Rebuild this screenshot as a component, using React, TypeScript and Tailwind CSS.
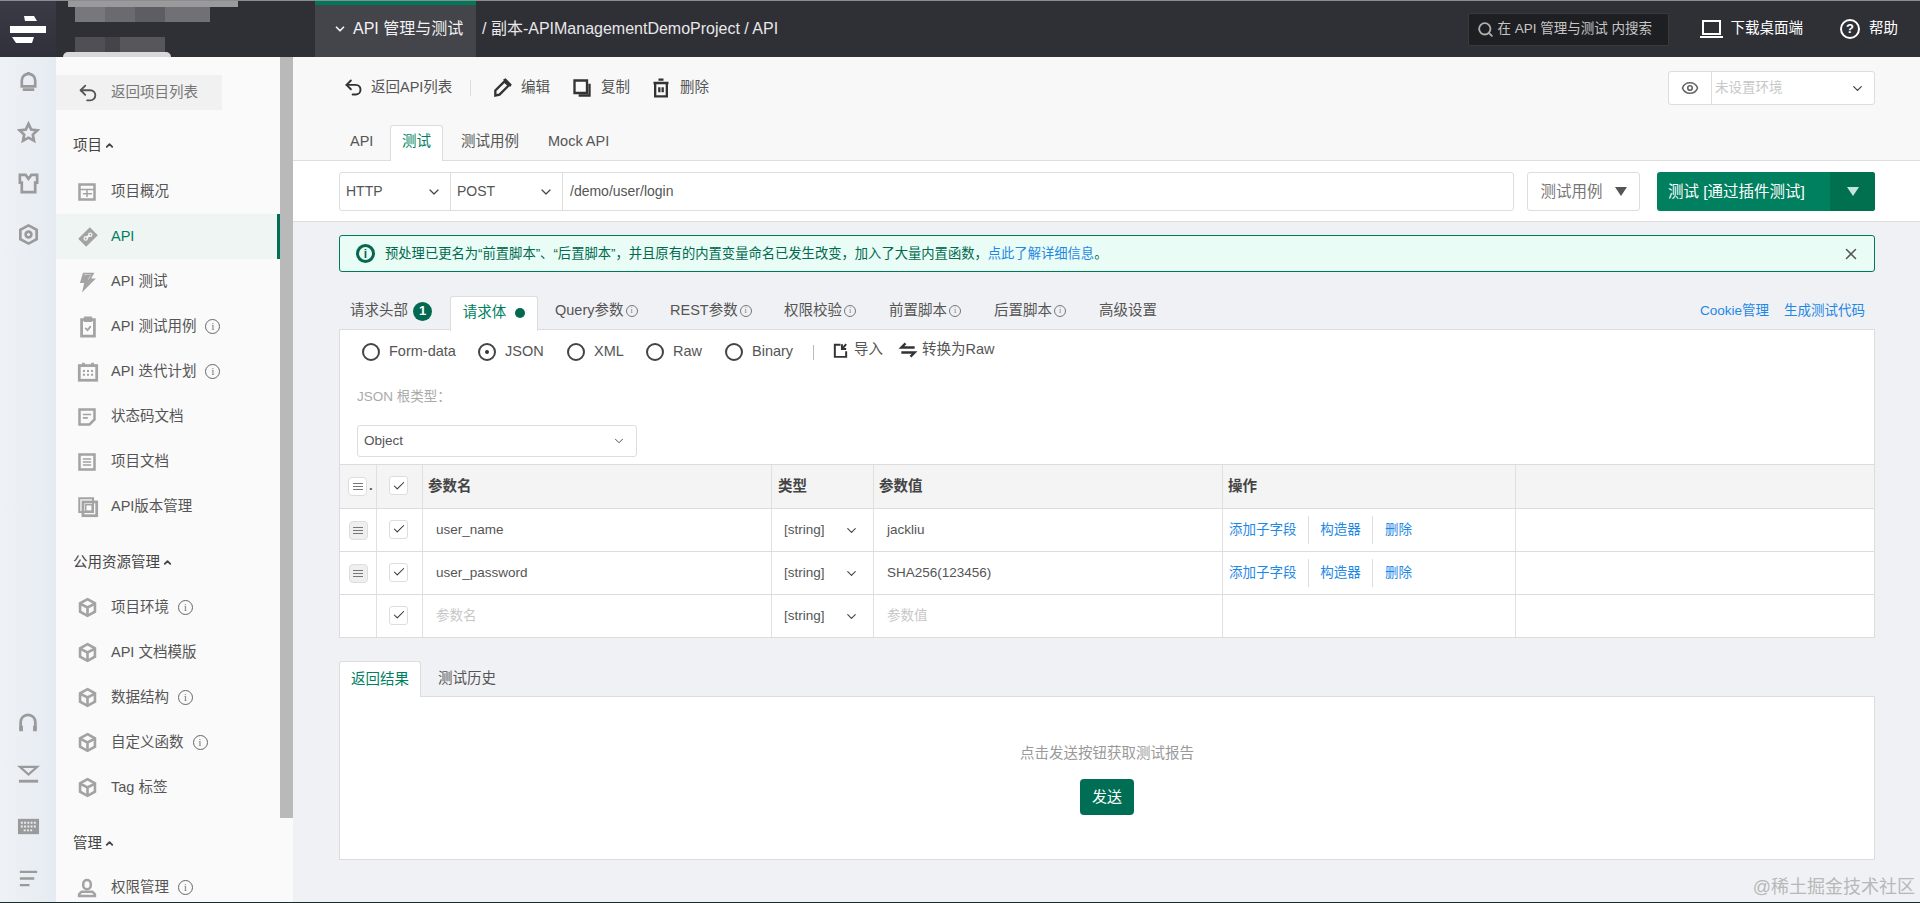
import React from "react";
import { ChevronDown, ChevronUp, Undo2, Search, X, Check, Eye } from "lucide-react";

const font = "[font-family:'Liberation_Sans','Noto_Sans_CJK_SC',sans-serif]";

function I({ children, size = 20, className = "", sw = 2.4 }: { children: React.ReactNode; size?: number; className?: string; sw?: number }) {
  return (
    <svg width={size} height={size} viewBox="0 0 24 24" fill="none" stroke="currentColor" strokeWidth={sw} className={"shrink-0 " + className}>
      {children}
    </svg>
  );
}

const Cube = () => (
  <I size={21} sw={3}>
    <path d="M12 2.5 20.5 7.2v9.6L12 21.5 3.5 16.8V7.2Z" />
    <path d="M3.5 7.5 12 12l8.5-4.5M12 12v9" />
  </I>
);

const Circ = () => (
  <span className="ml-[9px] inline-flex h-[15px] w-[15px] items-center justify-center rounded-full border border-[#666] text-[10px] leading-none text-[#666] [font-family:'Liberation_Serif',serif]">
    i
  </span>
);
const SmallCirc = () => (
  <span className="ml-[2px] inline-flex h-[12px] w-[12px] items-center justify-center rounded-full border border-[#777] text-[8px] leading-none text-[#777] [font-family:'Liberation_Serif',serif]">
    i
  </span>
);

const icons: Record<string, React.ReactNode> = {
  overview: (
    <I size={20} sw={3}>
      <rect x="3" y="3" width="18" height="18" />
      <path d="M3 9h18M12 9v5M7 14h11M12 14v4" strokeWidth={1.8} />
    </I>
  ),
  api: (
    <I size={22}>
      <path d="M3 14 14 3l7 7-11 11Z" fill="currentColor" />
      <path d="m10 13 4-3" stroke="#eef5f2" />
      <circle cx="9.5" cy="13.5" r="1.8" stroke="#eef5f2" strokeWidth={1.4} />
      <circle cx="14.5" cy="9.5" r="1.8" stroke="#eef5f2" strokeWidth={1.4} />
    </I>
  ),
  bolt: (
    <I size={20}>
      <path d="M8 2h11l-4 7h5L8 21l2-9H5Z" strokeWidth={2.2} />
      <path d="M8 4 6 11h4l-1 9 9-11h-5l4-6Z" fill="currentColor" stroke="none" />
    </I>
  ),
  clip: (
    <I size={22} sw={3}>
      <path d="M5 4h14v18H5ZM9 2h6v3H9Z" />
      <path d="m9 13 2.5 2.5L15 11" strokeWidth={2} />
    </I>
  ),
  cal: (
    <I size={22} sw={3}>
      <rect x="2.5" y="5" width="19" height="16" />
      <path d="M7 2v3M17 2v3" />
      <path d="M6.5 11h11M6.5 15h11" strokeDasharray="2.2 2.2" strokeWidth={2.2} />
    </I>
  ),
  note: (
    <I size={20} sw={3}>
      <path d="M3 3h18v12l-6 6H3Z" />
      <path d="M7 9h10M7 13h6" strokeWidth={2} />
    </I>
  ),
  doc: (
    <I size={20} sw={3}>
      <rect x="3" y="3" width="18" height="18" />
      <path d="M7 8.5h10M7 12h10M7 15.5h10" strokeWidth={1.8} />
    </I>
  ),
  version: (
    <I size={22}>
      <rect x="2.5" y="2.5" width="15" height="15" strokeWidth={2.2} />
      <rect x="6.5" y="6.5" width="15" height="15" strokeWidth={3} />
      <rect x="9.5" y="9.5" width="7" height="7" strokeWidth={1.6} />
    </I>
  ),
  cube: <Cube />,
  user: (
    <svg width="20" height="22" viewBox="0 0 24 24" fill="currentColor" className="shrink-0">
      <path d="M12 1a6 6 0 0 1 6 6v2a6 6 0 0 1-12 0V7a6 6 0 0 1 6-6Zm0 3a3 3 0 0 0-3 3v2a3 3 0 0 0 6 0V7a3 3 0 0 0-3-3Z" />
      <path d="M5 15h14l4 4v4H1v-4Zm1 3-2 2h16l-2-2Z" />
    </svg>
  ),
};

function NavItem({ icon, label, info, active }: { icon: string; label: string; info?: boolean; active?: boolean }) {
  return (
    <div className={"flex h-[45px] shrink-0 items-center pl-[21px] " + (active ? "border-r-[3px] border-[#006e54] bg-[#eef5f2] text-[#007f62]" : "text-[#555]")}>
      <span className="flex w-[34px] items-center text-[#a3a3a3]">{icons[icon]}</span>
      <span className="whitespace-pre text-[14.5px]">{label}</span>
      {info && <Circ />}
    </div>
  );
}

function Group({ label, className }: { label: string; className: string }) {
  return (
    <div className={"flex shrink-0 items-center pl-[17px] text-[14.5px] leading-[20px] text-[#444] " + className}>
      {label}
      <ChevronUp size={11} strokeWidth={4} className="ml-[2px] text-[#444]" />
    </div>
  );
}

function Sidebar() {
  return (
    <div className="flex h-full w-[237px] shrink-0 bg-[#fafafa]">
      <div className="flex w-[224px] flex-col overflow-hidden pt-[18px]">
        <div className="flex h-[35px] w-[166px] shrink-0 items-center bg-[#f1f1f1] pl-[21px] text-[14.5px] text-[#777]">
          <Undo2 size={22} strokeWidth={2} className="mr-[12px] text-[#555]" />
          返回项目列表
        </div>
        <Group label="项目" className="mt-[25px] mb-[14px]" />
        <NavItem icon="overview" label="项目概况" />
        <NavItem icon="api" label="API" active />
        <NavItem icon="bolt" label="API 测试" />
        <NavItem icon="clip" label="API 测试用例" info />
        <NavItem icon="cal" label="API 迭代计划" info />
        <NavItem icon="note" label="状态码文档" />
        <NavItem icon="doc" label="项目文档" />
        <NavItem icon="version" label="API版本管理" />
        <Group label="公用资源管理" className="mt-[23px] mb-[13px]" />
        <NavItem icon="cube" label="项目环境" info />
        <NavItem icon="cube" label="API 文档模版" />
        <NavItem icon="cube" label="数据结构" info />
        <NavItem icon="cube" label="自定义函数" info />
        <NavItem icon="cube" label="Tag 标签" />
        <Group label="管理" className="mt-[23px] mb-[12px]" />
        <NavItem icon="user" label="权限管理" info />
      </div>
      <div className="w-[13px] shrink-0">
        <div className="h-[761px] bg-[#b9b9b9]" />
      </div>
    </div>
  );
}

function Rail() {
  return (
    <div className="flex h-full w-14 shrink-0 flex-col items-center justify-between bg-gradient-to-r from-[#eef2f6] to-[#e6ebf2] pb-[12px] pt-[13px] text-[#9a9a9a]">
      <div className="flex flex-col items-center gap-[28px]">
        <I size={23} sw={2.8}>
          <path d="M5 17V11a7 7 0 0 1 14 0v6Z" />
          <path d="M12 2v2M6 20.5h12" />
        </I>
        <I size={23} sw={2.8}>
          <path d="m12 3 2.8 6 6.4.8-4.7 4.4 1.2 6.4L12 17.4 6.3 20.6l1.2-6.4L2.8 9.8 9.2 9Z" />
        </I>
        <I size={23} sw={2.8}>
          <path d="M3 3h6l3 4 3-4h6v8h-2v10H5V11H3Z" />
        </I>
        <I size={23} sw={2.8}>
          <path d="M12 2.5 20.5 7v10L12 21.5 3.5 17V7Z" />
          <circle cx="12" cy="12" r="3" />
        </I>
      </div>
      <div className="flex flex-col items-center gap-[29px]">
        <I size={22} sw={3}>
          <path d="M4 20v-9a8 8 0 0 1 16 0v9" />
          <path d="M2.5 15h4v6h-4ZM17.5 15h4v6h-4Z" fill="currentColor" stroke="none" />
        </I>
        <I size={23}>
          <path d="M3 4h18l-9 8Z" strokeWidth={2.4} />
          <path d="M2 19h20" strokeWidth={3} />
        </I>
        <svg width="23" height="23" viewBox="0 0 24 24" className="shrink-0">
          <rect x="1" y="4" width="22" height="16" fill="currentColor" />
          <path d="M4 8h16M4 12h16M7 16h10" stroke="#e9eef4" strokeWidth={2} strokeDasharray="2 1.4" />
        </svg>
        <I size={23}>
          <path d="M3 5h18M3 12h15M3 19h10" />
        </I>
      </div>
    </div>
  );
}

function Header() {
  return (
    <div className="relative flex h-[57px] shrink-0 items-stretch border-t border-[#8b8b90] bg-[#2f2f36] text-white">
      <div className="flex w-14 shrink-0 items-center justify-center bg-gradient-to-b from-[#3a3b46] to-[#2f3039]">
        <svg width="36" height="28" viewBox="0 0 36 28" fill="#fff">
          <path d="M14 1h10l3 5H15ZM0 11h36v7H0ZM2 22h22l-2 6H6Z" />
        </svg>
      </div>
      <div className="w-[259px] shrink-0" />
      <div className="flex w-[161px] shrink-0 items-center border-t-[4px] border-[#00785a] bg-[#44454b] pb-[4px] pl-[18px] text-[16px] text-[#f2f2f2]">
        <ChevronDown size={14} strokeWidth={3} className="mr-[6px]" />
        API 管理与测试
      </div>
      <div className="ml-[6px] flex items-center whitespace-pre text-[16px] text-[#e8e8e8]">/ 副本-APIManagementDemoProject / API</div>
      <div className="flex-1" />
      <div className="my-auto flex h-[33px] w-[201px] items-center rounded-[2px] border border-[#3a3a3a] bg-[#1e1f22] pl-[8px] text-[13.5px] text-[#c6c6c6]">
        <Search size={17} strokeWidth={2.6} className="mr-[4px] text-[#b0b0a8]" />
        在 API 管理与测试 内搜索
      </div>
      <div className="ml-[31px] flex items-center text-[14.5px]">
        <svg width="23" height="20" viewBox="0 0 23 20" fill="none" stroke="#fff" strokeWidth={2} className="mr-[8px] shrink-0">
          <path d="M3 2h17v13H3Z" />
          <path d="M0 18h23" />
        </svg>
        下载桌面端
      </div>
      <div className="ml-[37px] mr-[22px] flex items-center text-[14.5px]">
        <span className="mr-[9px] flex h-[20px] w-[20px] items-center justify-center rounded-full border-2 border-white text-[13px] font-bold">?</span>
        帮助
      </div>
      <div className="pointer-events-none absolute left-[75px] top-[6px] flex h-[15px] w-[135px]">
        <div className="w-[30px] bg-[#77777c]" />
        <div className="w-[30px] bg-[#6a6a6f]" />
        <div className="w-[30px] bg-[#5d5d63]" />
        <div className="w-[45px] bg-[#707075]" />
      </div>
      <div className="pointer-events-none absolute left-[75px] top-[36px] flex h-[15px] w-[90px]">
        <div className="w-[30px] bg-[#4f4f55]" />
        <div className="w-[15px] bg-[#454549]" />
        <div className="w-[45px] bg-[#56565b]" />
      </div>
      <div className="pointer-events-none absolute left-[68px] top-0 h-[6px] w-[170px] bg-[#9a9a9d]" />
      <div className="pointer-events-none absolute left-[63px] top-[51px] h-[5px] w-[108px] rounded-t-[6px] bg-[#d8d8da]" />
    </div>
  );
}

function Toolbar() {
  const Act = ({ icon, label, cls }: { icon: React.ReactNode; label: string; cls: string }) => (
    <div className={"flex items-center whitespace-nowrap text-[14.5px] text-[#555] " + cls}>
      {icon}
      {label}
    </div>
  );
  return (
    <div className="h-[103px] shrink-0 bg-[#f8f8f8] pl-[46px] pr-[45px]">
      <div className="flex h-[68px] items-start justify-between">
        <div className="flex h-[61px] items-center text-[#333]">
          <Act cls="w-[131px] pl-[4px]" label="返回API列表" icon={<Undo2 size={21} strokeWidth={2.2} className="mr-[7px] text-[#333]" />} />
          <div className="h-[16px] w-px bg-[#ddd]" />
          <Act cls="ml-[21px] w-[80px]" label="编辑" icon={<I size={20} sw={2.8} className="mr-[9px] text-[#333]"><path d="M4 21v-6L15 4l5 5L9 20ZM14 3l2-1 6 6-1 2" /></I>} />
          <Act cls="w-[79px]" label="复制" icon={<I size={20} sw={2.8} className="mr-[9px] text-[#333]"><path d="M3 3h15v15H3Z" /><path d="M21 7v14H8" /></I>} />
          <Act cls="" label="删除" icon={<I size={20} sw={2.8} className="mr-[9px] text-[#333]"><path d="M3 6h18M9 2h6M5 6h14v16H5ZM10 11v6M14 11v6" /></I>} />
        </div>
        <div className="mt-[14px] flex h-[34px] w-[207px] items-stretch rounded-[3px] border border-[#ddd] bg-white">
          <div className="flex w-[43px] items-center justify-center border-r border-[#ddd]">
            <Eye size={18} strokeWidth={2.2} className="text-[#666]" />
          </div>
          <div className="flex flex-1 items-center justify-between pl-[3px] pr-[9px] text-[13.5px] text-[#c8c8c8]">
            未设置环境
            <ChevronDown size={15} strokeWidth={2} className="text-[#444]" />
          </div>
        </div>
      </div>
      <div className="flex h-[35px] items-center pb-[2px] text-[14.5px] text-[#555]">
        <span className="ml-[11px] w-[40px]">API</span>
        <span className="flex h-[36px] w-[53px] translate-y-[1px] items-center justify-center rounded-t-[3px] border border-b-0 border-[#ddd] bg-white pb-[2px] text-[#007f62]">测试</span>
        <span className="ml-[18px] w-[87px]">测试用例</span>
        <span>Mock API</span>
      </div>
    </div>
  );
}

function RequestRow() {
  const Sel = ({ label, w, cls }: { label: string; w: string; cls: string }) => (
    <div className={"flex items-center justify-between border border-[#ddd] bg-white pl-[6px] pr-[8px] text-[14px] text-[#555] " + w + " " + cls}>
      {label}
      <ChevronDown size={16} strokeWidth={1.8} className="text-[#444]" />
    </div>
  );
  return (
    <div className="flex h-[62px] shrink-0 items-start border-y border-[#dedede] bg-white pl-[46px] pr-[45px] pt-[11px]">
      <div className="flex h-[39px] w-[1175px] shrink-0">
        <Sel label="HTTP" w="w-[112px]" cls="rounded-l-[3px]" />
        <Sel label="POST" w="w-[113px]" cls="-ml-px" />
        <div className="-ml-px flex flex-1 items-center rounded-r-[3px] border border-[#ddd] pl-[7px] text-[14px] text-[#555]">/demo/user/login</div>
      </div>
      <div className="ml-[13px] flex h-[39px] w-[113px] shrink-0 items-center justify-center rounded-[3px] border border-[#ddd] text-[15.5px] text-[#777]">
        测试用例
        <span className="ml-[12px] h-0 w-0 border-x-[6.5px] border-t-[9px] border-x-transparent border-t-[#555]" />
      </div>
      <div className="ml-[17px] flex h-[39px] w-[218px] shrink-0 overflow-hidden rounded-[3px] bg-[#00805f] text-[15.5px] text-white">
        <div className="flex flex-1 items-center whitespace-nowrap pl-[11px]">测试 [通过插件测试]</div>
        <div className="flex w-[45px] items-center justify-center bg-[#00704f]">
          <span className="h-0 w-0 border-x-[6.5px] border-t-[9px] border-x-transparent border-t-[#c5e6da]" />
        </div>
      </div>
    </div>
  );
}

function Alert() {
  return (
    <div className="mt-[13px] flex h-[37px] items-center rounded-[3px] border border-[#00785a] bg-[#e9fcf5] pl-[16px] pr-[14px] text-[13.3px]">
      <span className="mr-[10px] flex h-[19px] w-[19px] items-center justify-center rounded-full border-[3px] border-[#00694f] text-[12px] font-bold text-[#00694f]">i</span>
      <span className="text-[#00694f]">预处理已更名为“前置脚本”、“后置脚本”，并且原有的内置变量命名已发生改变，加入了大量内置函数，</span>
      <span className="text-[#1e88e5]">点此了解详细信息</span>
      <span className="text-[#00694f]">。</span>
      <div className="flex-1" />
      <X size={18} strokeWidth={2} className="text-[#555]" />
    </div>
  );
}

function ReqTabs() {
  const T = ({ children, cls }: { children: React.ReactNode; cls: string }) => (
    <span className={"flex items-center whitespace-nowrap " + cls}>{children}</span>
  );
  return (
    <div className="mt-[23px] flex h-[34px] items-center pb-[2px] text-[14.5px] text-[#555]">
      <T cls="ml-[11px] w-[100px]">
        请求头部
        <span className="ml-[5px] flex h-[19px] w-[19px] items-center justify-center rounded-full bg-[#00694f] text-[13px] font-bold text-white">1</span>
      </T>
      <T cls="relative z-10 h-[35px] w-[88px] translate-y-[2px] justify-center rounded-t-[3px] border border-b-0 border-[#ddd] bg-white pb-[2px] text-[#007f62]">
        请求体
        <span className="ml-[9px] h-[10px] w-[10px] rounded-full bg-[#00694f]" />
      </T>
      <T cls="ml-[17px] w-[115px]">Query参数<SmallCirc /></T>
      <T cls="w-[114px]">REST参数<SmallCirc /></T>
      <T cls="w-[105px]">权限校验<SmallCirc /></T>
      <T cls="w-[105px]">前置脚本<SmallCirc /></T>
      <T cls="w-[105px]">后置脚本<SmallCirc /></T>
      <T cls="">高级设置</T>
      <div className="flex-1" />
      <span className="text-[13.5px] text-[#1e88e5]">Cookie管理</span>
      <span className="ml-[15px] mr-[10px] text-[13.5px] text-[#1e88e5]">生成测试代码</span>
    </div>
  );
}

function Radio({ label, on, cls }: { label: string; on?: boolean; cls: string }) {
  return (
    <div className={"flex items-center " + cls}>
      <span className="mr-[9px] flex h-[18px] w-[18px] items-center justify-center rounded-full border-2 border-[#444]">
        {on && <span className="h-[4px] w-[4px] rounded-full bg-[#333]" />}
      </span>
      {label}
    </div>
  );
}

const Cell = ({ children, cls = "" }: { children?: React.ReactNode; cls?: string }) => (
  <div className={"flex items-center border-r border-[#e0e0e0] last:border-r-0 " + cls}>{children}</div>
);
const Cb = () => (
  <span className="flex h-[19px] w-[19px] -translate-x-px -translate-y-px items-center justify-center rounded-[3px] border border-[#ddd] bg-white">
    <Check size={14} strokeWidth={1.8} className="text-[#333]" />
  </span>
);
const Drag = ({ light }: { light?: boolean }) => (
  <span className={"flex h-[19px] w-[19px] flex-col items-center justify-center gap-[2px] rounded-[4px] border border-[#ddd] " + (light ? "bg-white" : "bg-[#efefef]")}>
    <span className="h-px w-[10px] bg-[#777]" />
    <span className="h-px w-[10px] bg-[#777]" />
    <span className="h-px w-[10px] bg-[#777]" />
  </span>
);

const rowGrid = "grid grid-cols-[37px_46px_349px_102px_349px_293px_1fr] border-t border-[#dcdcdc] text-[13.5px] text-[#555]";

function Row({ name, value, placeholder }: { name: string; value: string; placeholder?: boolean }) {
  const ph = placeholder ? "text-[#c8c8c8]" : "";
  return (
    <div className={rowGrid + " h-[43px]"}>
      <Cell cls="justify-center">{!placeholder && <Drag />}</Cell>
      <Cell cls="justify-center"><Cb /></Cell>
      <Cell cls={"pl-[13px] " + ph}>{name}</Cell>
      <Cell cls="justify-between pl-[12px] pr-[14px]">
        [string]
        <ChevronDown size={15} strokeWidth={1.8} className="text-[#444]" />
      </Cell>
      <Cell cls={"pl-[13px] " + ph}>{value}</Cell>
      <Cell cls="pl-[6px] text-[#1e88e5]">
        {!placeholder && (
          <>
            <span className="flex h-[28px] w-[80px] items-center border-r border-[#ddd]">添加子字段</span>
            <span className="flex h-[28px] w-[64px] items-center justify-center border-r border-[#ddd]">构造器</span>
            <span className="ml-[12px]">删除</span>
          </>
        )}
      </Cell>
      <Cell />
    </div>
  );
}

function Body() {
  return (
    <div className="border border-t border-[#dcdcdc] bg-white">
      <div className="flex h-[44px] items-center pl-[22px] text-[14.5px] text-[#555]">
        <Radio cls="w-[116px]" label="Form-data" />
        <Radio cls="w-[89px]" on label="JSON" />
        <Radio cls="w-[79px]" label="XML" />
        <Radio cls="w-[79px]" label="Raw" />
        <Radio cls="w-[88px]" label="Binary" />
        <span className="mr-[18px] h-[15px] w-px bg-[#bbb]" />
        <span className="mr-[15px] flex -translate-y-[2px] items-center">
          <I size={17} sw={2.8} className="mr-[5px] text-[#333]"><path d="M12 4H4v17h16v-8M14 3v7h6M20 3l-6 7" /></I>
          导入
        </span>
        <span className="flex -translate-y-[2px] items-center">
          <I size={20} sw={2.8} className="mr-[4px] text-[#333]"><path d="M20 9H4l5-5M4 15h16l-5 5" /></I>
          转换为Raw
        </span>
      </div>
      <div className="flex h-[51px] items-center pb-[5px] pl-[17px] text-[13.5px] text-[#aaa]">JSON 根类型：</div>
      <div className="px-[17px]">
        <div className="flex h-[32px] w-[280px] items-center justify-between rounded-[3px] border border-[#ddd] pl-[6px] pr-[10px] text-[13.5px] text-[#555]">
          Object
          <ChevronDown size={14} strokeWidth={1.6} className="text-[#444]" />
        </div>
      </div>
      <div className="mt-[7px]">
        <div className={rowGrid + " h-[44px] bg-[#f4f4f4] font-bold"}>
          <Cell cls="pl-[8px]"><Drag light /><span className="ml-[2px]">.</span></Cell>
          <Cell cls="justify-center"><Cb /></Cell>
          <Cell cls="pl-[5px] text-[14.5px] text-[#444]">参数名</Cell>
          <Cell cls="pl-[6px] text-[14.5px] text-[#444]">类型</Cell>
          <Cell cls="pl-[5px] text-[14.5px] text-[#444]">参数值</Cell>
          <Cell cls="pl-[5px] text-[14.5px] text-[#444]">操作</Cell>
          <Cell />
        </div>
        <Row name="user_name" value="jackliu" />
        <Row name="user_password" value="SHA256(123456)" />
        <Row name="参数名" value="参数值" placeholder />
      </div>
    </div>
  );
}

function Result() {
  return (
    <>
      <div className="mt-[23px] flex h-[35px] items-stretch text-[14.5px] text-[#555]">
        <span className="relative z-10 flex h-[36px] w-[82px] items-center justify-center rounded-t-[3px] border border-b-0 border-[#ddd] bg-white text-[#007f62]">返回结果</span>
        <span className="ml-[17px] flex items-center">测试历史</span>
      </div>
      <div className="flex h-[164px] flex-col items-center border border-[#dcdcdc] bg-white pt-[46px]">
        <div className="text-[14.5px] text-[#999]">点击发送按钮获取测试报告</div>
        <div className="mt-[14px] flex h-[36px] w-[54px] items-center justify-center rounded-[4px] bg-[#006e54] text-[15px] text-white">发送</div>
      </div>
    </>
  );
}

export default function App() {
  return (
    <div className={"relative flex h-[903px] w-[1920px] flex-col overflow-hidden border-b border-[#1c2b2b] bg-[#f0f1f4] " + font}>
      <Header />
      <div className="flex min-h-0 flex-1">
        <Rail />
        <Sidebar />
        <div className="flex min-w-0 flex-1 flex-col">
          <Toolbar />
          <RequestRow />
          <div className="pl-[46px] pr-[45px]">
            <Alert />
            <ReqTabs />
            <Body />
            <Result />
          </div>
        </div>
      </div>
      <div className="absolute bottom-[3px] right-[5px] text-[18px] leading-[24px] text-[#b8b8b8]">@稀土掘金技术社区</div>
    </div>
  );
}
